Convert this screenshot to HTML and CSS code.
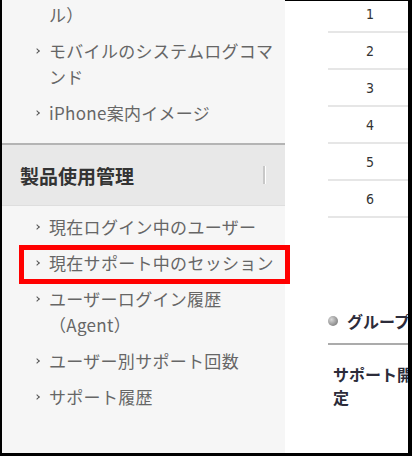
FILE: index.html
```html
<!DOCTYPE html>
<html lang="ja">
<head>
    <meta charset="UTF-8">
    <meta name="viewport" content="width=device-width, initial-scale=1.0">
    <title>製品使用管理</title>
    <link rel="stylesheet" href="styles.css">
</head>
<body>
    <div class="frame">
        <aside class="sidebar">
            <ul class="menu menu-top">
                <li>デスクトップログ取得（ツール）</li>
                <li>モバイルのシステムログコマンド</li>
                <li>iPhone案内イメージ</li>
            </ul>
            <div class="section-head">
                <span>製品使用管理</span>
                <span class="grip"></span>
            </div>
            <ul class="menu">
                <li>現在ログイン中のユーザー</li>
                <li>現在サポート中のセッション</li>
                <li>ユーザーログイン履歴（Agent）</li>
                <li>ユーザー別サポート回数</li>
                <li>サポート履歴</li>
            </ul>
        </aside>
        <main class="content">
            <table class="num-table">
                <tr><td>1</td></tr>
                <tr><td>2</td></tr>
                <tr><td>3</td></tr>
                <tr><td>4</td></tr>
                <tr><td>5</td></tr>
                <tr><td>6</td></tr>
            </table>
            <h2 class="group-title"><span class="dot"></span>グループ</h2>
            <p class="group-label">サポート開始設定</p>
        </main>
        <!-- annotation box drawn over the menu -->
        <div class="highlight"></div>
    </div>
</body>
</html>
```

FILE: styles.css
```css
html, body {
    margin: 0;
    padding: 0;
}
body {
    width: 412px;
    height: 456px;
    overflow: hidden;
    background-color: white;
    font-family: "Noto Sans CJK JP", "Liberation Sans", sans-serif;
}
.frame {
    position: relative;
    box-sizing: border-box;
    width: 412px;
    height: 456px;
    display: flex;
    border-left: 2px solid black;
    border-right: 4px solid black;
    border-bottom: 3px solid black;
    overflow: hidden;
}
.sidebar {
    flex: none;
    width: 283px;
    background-color: #F6F6F6;
    overflow: hidden;
}
.menu {
    list-style: none;
    margin: 0;
    padding: 3px 0 0 33px;
}
.menu-top {
    margin-top: -29px;
    padding-top: 0;
    margin-bottom: 12px;
}
.menu li {
    display: flex;
    width: 246px;
    padding: 5px 0;
    font-size: 17px;
    line-height: 26px;
    letter-spacing: 0.3px;
    color: #666;
}
.menu li::before {
    content: "";
    flex: none;
    width: 3px;
    height: 3px;
    margin: 11px 10px 0 0;
    border-top: 1.5px solid #555;
    border-right: 1.5px solid #555;
    transform: rotate(45deg);
}
.section-head {
    display: flex;
    align-items: center;
    justify-content: space-between;
    height: 60px;
    padding: 0 19px 0 18px;
    border-top: 2px solid #B4B4B4;
    border-bottom: 1px solid #DEDEDE;
    background-color: #E8E8E8;
    font-size: 19px;
    font-weight: bold;
    color: #333;
}
.grip {
    width: 2px;
    height: 18px;
    background-color: #C8C8C8;
    border-right: 1px solid white;
}
.content {
    flex: 1;
    min-width: 0;
    border-top: 1px solid black;
    padding-left: 43px;
    overflow: hidden;
    background-color: white;
}
.num-table {
    width: 84px;
    margin-top: -5px;
    border-collapse: collapse;
}
.num-table td {
    height: 35px;
    padding: 0;
    border-bottom: 2px solid #E6E6E6;
    text-align: center;
    font-family: "DejaVu Sans Condensed", "Liberation Sans", sans-serif;
    font-stretch: condensed;
    font-size: 14px;
    color: #333;
}
.group-title {
    display: flex;
    align-items: center;
    width: 120px;
    margin: 91px 0 0;
    padding-bottom: 10px;
    border-bottom: 2px solid #ABABAB;
    font-size: 16px;
    line-height: 24px;
    font-weight: bold;
    color: #2C2C3A;
    white-space: nowrap;
}
.dot {
    flex: none;
    width: 10px;
    height: 10px;
    margin-right: 9px;
    border-radius: 50%;
    background: radial-gradient(circle at 35% 35%, #D8D8D8, #8A8A8A 70%);
}
.group-label {
    width: 115px;
    margin: 18px 0 0;
    padding-left: 5px;
    font-size: 16px;
    line-height: 23px;
    font-weight: bold;
    color: #2C2C3A;
}
.highlight {
    position: absolute;
    left: 17px;
    top: 245px;
    width: 261px;
    height: 29px;
    border: 5px solid #FF0000;
}
```
